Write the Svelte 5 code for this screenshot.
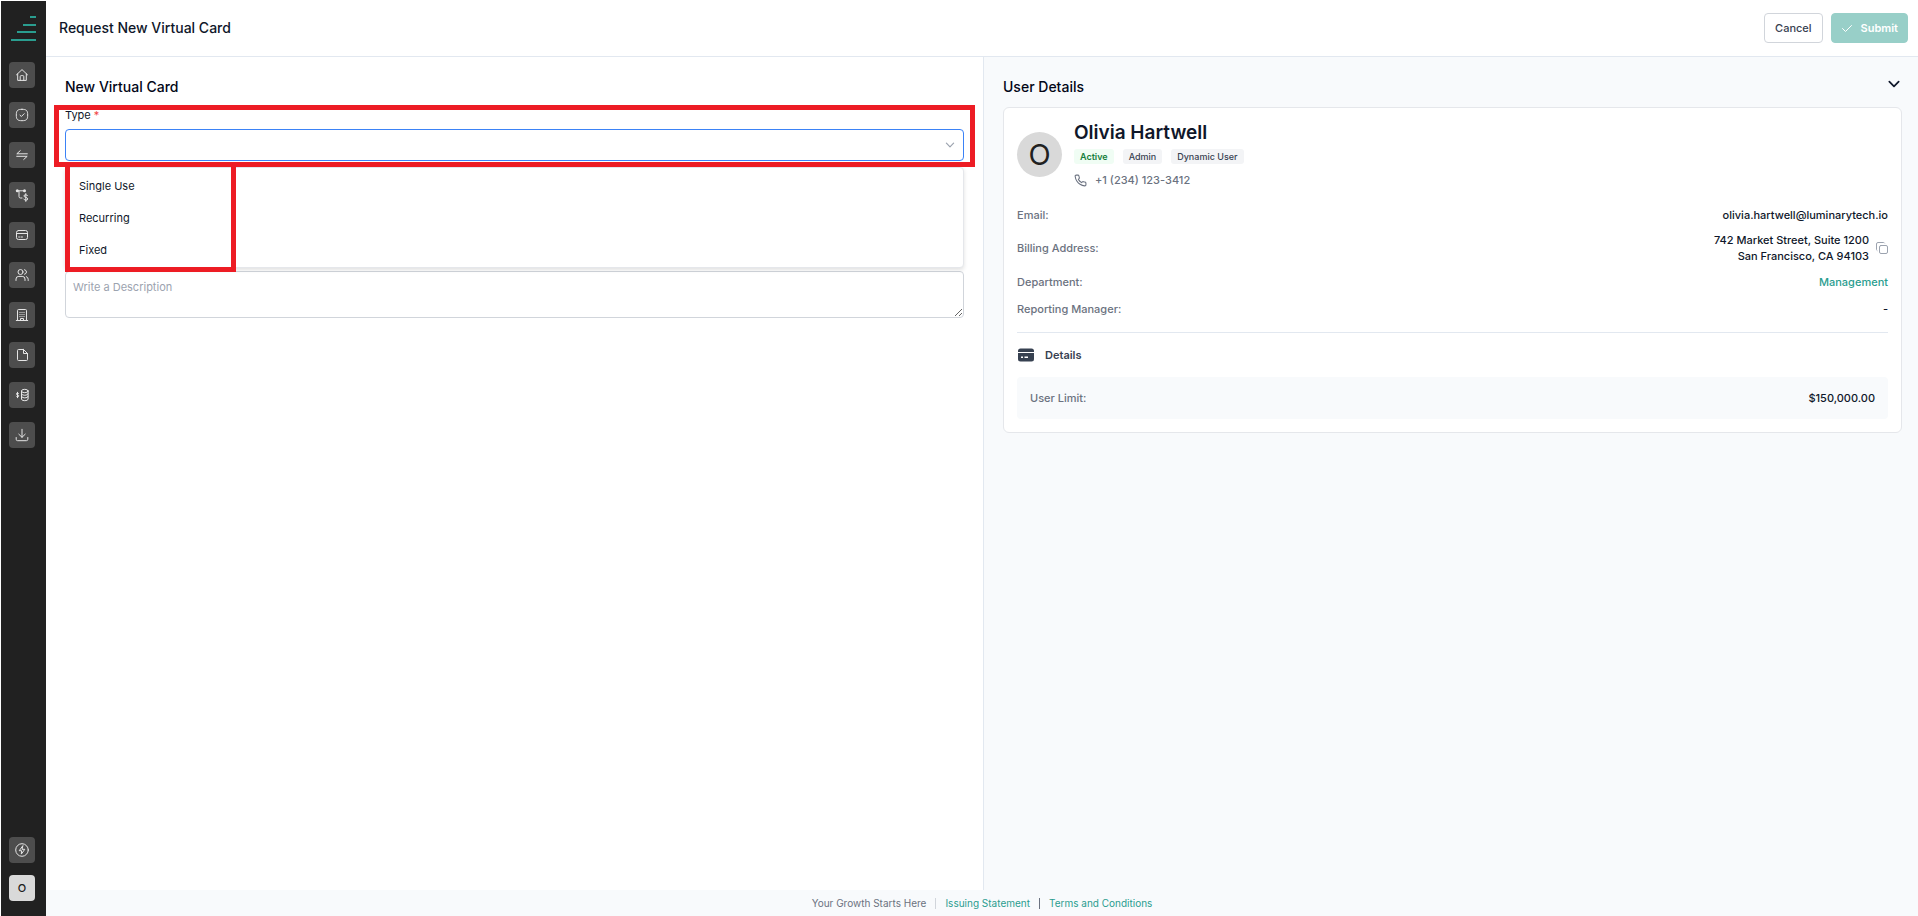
<script>
  let cardType = $state("");
  let description = $state("");
  let menuOpen = $state(true);
  let detailsOpen = $state(true);

  const types = ["Single Use", "Recurring", "Fixed"];

  const navItems = [
    { name: "Home", icon: "home" },
    { name: "Approvals", icon: "approve" },
    { name: "Transfers", icon: "transfer" },
    { name: "Spend Rules", icon: "rules" },
    { name: "Cards", icon: "card" },
    { name: "Users", icon: "users" },
    { name: "Departments", icon: "building" },
    { name: "Documents", icon: "file" },
    { name: "Budgets", icon: "coins" },
    { name: "Downloads", icon: "download" },
  ];

  function pickType(type) {
    cardType = type;
    menuOpen = false;
  }

  function toggleMenu(event) {
    event.preventDefault();
    menuOpen = !menuOpen;
  }
</script>

{#snippet navIcon(icon)}
  <svg class="nav-icon" viewBox="0 0 14 14" aria-hidden="true">
    {#if icon === "home"}
      <path d="M1.5 6.8 7 1.6l5.500 5.200M2.700 6v6.400h8.600V6M5.200 12.300V8.600a1 1 0 0 1 1-1h1.600a1 1 0 0 1 1 1v3.700" />
    {:else if icon === "approve"}
      <path d="M7 1.300c4.500 0 5.700 1.200 5.700 5.700s-1.200 5.700-5.700 5.700S1.300 11.500 1.300 7 2.500 1.300 7 1.300z" />
      <path d="m5 7.200 1.400 1.300L9.200 5.700" />
    {:else if icon === "transfer"}
      <path d="M12.300 5.800H1.800L5.300 2.600M1.700 8.300h10.500l-3.500 3.200" />
    {:else if icon === "rules"}
      <path d="M3 2.800h6M4 3v5.500q0 1.500 1.500 1.500H7" />
      <circle class="solid" cx="2.300" cy="2.800" r="1.500" />
      <circle class="solid" cx="9.500" cy="2.800" r="1.500" />
      <path d="M12.500 7.700q-.6-1-1.900-1-1.600 0-1.600 1.300 0 1 1.800 1.400 1.900.4 1.900 1.500 0 1.300-1.800 1.300-1.500 0-2.100-1.100M10.800 5.600v7.800" />
    {:else if icon === "card"}
      <rect x="1.500" y="2.500" width="11" height="9" rx="2" />
      <path d="M1.500 5.500h11M3.700 9h.8M6 9h1.500" />
    {:else if icon === "users"}
      <circle cx="5.500" cy="4" r="2.500" />
      <path d="M1 12.500V11q0-2.600 2.800-2.600h3.400Q10 8.400 10 11v1.500M9.500 1.700q2 .5 2 2.300t-2 2.300M11.300 8.600q1.900.6 1.900 2.700v1.200" />
    {:else if icon === "building"}
      <path d="M1.300 12.500h11.400M2.500 12.500v-10q0-1 1-1h7q1 0 1 1v10" />
      <path class="dots" d="M4.500 4.500h1M6.500 4.500h1M8.500 4.500h1M4.500 6.500h1M6.500 6.500h1M8.500 6.500h1M4.500 8.500h1M6.500 8.500h1M8.500 8.500h1M5.500 12.500v-2h3v2" />
    {:else if icon === "file"}
      <path d="M8.500 1.500h-5q-1 0-1 1v9q0 1 1 1h8q1 0 1-1v-6l-4-4zM8.500 1.500v4h4" />
    {:else if icon === "coins"}
      <ellipse cx="9.800" cy="3" rx="3.300" ry="1.700" />
      <path d="M6.500 3v8q0 1.700 3.300 1.700t3.300-1.700V3M6.500 5.700q0 1.600 3.300 1.600t3.300-1.600M6.500 8.300q0 1.600 3.300 1.600t3.300-1.600" />
      <path d="M3.700 5.600q-.4-.5-1.200-.5-1.100 0-1.100.9 0 .7 1.200.9t1.200 1q0 .9-1.200.9-.9 0-1.300-.6M2.500 4.300v5.400" />
    {:else if icon === "download"}
      <path d="M7 1.300v8M3.800 6.200 7 9.300l3.200-3.100M1.200 9.500v1.800q0 1.400 1.400 1.400h8.800q1.400 0 1.400-1.400V9.500" />
    {:else if icon === "bolt"}
      <circle cx="7" cy="7" r="6.300" />
      <path d="M7.700 2.900 4.200 7.700h2.400l-.3 3.400 3.500-4.800H7.400z" />
    {/if}
  </svg>
{/snippet}

<div class="app">
  <aside class="sidebar">
    <svg class="logo" viewBox="0 0 25 26" aria-hidden="true">
      <path d="M19 1h6M12 9h13M6 16h19M0 24h25" />
    </svg>
    <nav class="nav" aria-label="Main">
      {#each navItems as item}
        <button class="nav-button" aria-label={item.name}>{@render navIcon(item.icon)}</button>
      {/each}
    </nav>
    <div class="nav-bottom">
      <button class="nav-button" aria-label="Quick actions">{@render navIcon("bolt")}</button>
      <button class="nav-button profile">O</button>
    </div>
  </aside>

  <div class="page">
    <header class="header">
      <h1>Request New Virtual Card</h1>
      <div class="actions">
        <button class="btn">Cancel</button>
        <button class="btn submit" disabled>
          <svg class="check" viewBox="0 0 12 12" aria-hidden="true"><path d="m1.500 6.500 3 3 6-6" /></svg>
          Submit
        </button>
      </div>
    </header>

    <main class="content">
      <section class="form">
        <h2>New Virtual Card</h2>
        <div class="field">
          <label for="type">Type <span class="required">*</span></label>
          <div class="select-wrap">
            <select id="type" bind:value={cardType} onmousedown={toggleMenu}>
              <option value=""></option>
              {#each types as type}
                <option value={type}>{type}</option>
              {/each}
            </select>
            <svg class="select-arrow" viewBox="0 0 10 10" aria-hidden="true"><path d="m2 3.500 3 3 3-3" /></svg>
            {#if menuOpen}
              <div class="menu">
                {#each types as type}
                  <button class="option" onclick={() => pickType(type)}>{type}</button>
                {/each}
                <div class="mark mark-menu"></div>
              </div>
            {/if}
          </div>
          <div class="mark mark-field"></div>
        </div>
        <textarea aria-label="Description" placeholder="Write a Description" bind:value={description}></textarea>
      </section>

      <section class="details">
        <div class="details-head">
          <h2>User Details</h2>
          <button class="collapse" aria-label="Toggle user details" onclick={() => (detailsOpen = !detailsOpen)}>
            <svg viewBox="0 0 12 12" aria-hidden="true"><path d="m2 4 4 4 4-4" /></svg>
          </button>
        </div>

        {#if detailsOpen}
          <div class="card">
            <div class="user">
              <div class="avatar">O</div>
              <div>
                <h3>Olivia Hartwell</h3>
                <div class="badges">
                  <span class="badge active">Active</span>
                  <span class="badge">Admin</span>
                  <span class="badge">Dynamic User</span>
                </div>
                <div class="phone">
                  <svg viewBox="0 0 24 24" aria-hidden="true"><path d="M22 16.920v3a2 2 0 0 1-2.180 2 19.790 19.790 0 0 1-8.630-3.070 19.500 19.500 0 0 1-6-6 19.790 19.790 0 0 1-3.070-8.670A2 2 0 0 1 4.110 2h3a2 2 0 0 1 2 1.720c.127.960.361 1.903.7 2.810a2 2 0 0 1-.45 2.110L8.090 9.910a16 16 0 0 0 6 6l1.270-1.270a2 2 0 0 1 2.110-.45c.907.339 1.850.573 2.810.7A2 2 0 0 1 22 16.920z" /></svg>
                  +1 (234) 123-3412
                </div>
              </div>
            </div>

            <dl class="rows">
              <div class="row">
                <dt>Email:</dt>
                <dd>olivia.hartwell@luminarytech.io</dd>
              </div>
              <div class="row">
                <dt>Billing Address:</dt>
                <dd class="address">
                  <span>742 Market Street, Suite 1200<br />San Francisco, CA 94103</span>
                  <button class="copy" aria-label="Copy address">
                    <svg viewBox="0 0 12 12" aria-hidden="true">
                      <rect x="3.500" y="3.500" width="8" height="8" rx="1.500" />
                      <path d="M1 8.500Q.5 8.200.5 7.500V2Q.5.5 2 .5h5.500q.7 0 1 .5" />
                    </svg>
                  </button>
                </dd>
              </div>
              <div class="row">
                <dt>Department:</dt>
                <dd><a href="#management">Management</a></dd>
              </div>
              <div class="row">
                <dt>Reporting Manager:</dt>
                <dd>-</dd>
              </div>
            </dl>

            <h4>
              <svg viewBox="0 0 18 14" aria-hidden="true">
                <path d="M1 4V3q0-2.500 2.500-2.500h11Q17 .5 17 3v1z" />
                <path fill-rule="evenodd" d="M1 5h16v6q0 2.500-2.500 2.500h-11Q1 13.500 1 11zM4 8.500v1.500h2V8.500zM7.500 8.500v1.500H11V8.500z" />
              </svg>
              Details
            </h4>
            <dl class="limit">
              <dt>User Limit:</dt>
              <dd>$150,000.00</dd>
            </dl>
          </div>
        {/if}
      </section>
    </main>

    <footer class="footer">
      <span>Your Growth Starts Here</span>
      <span class="sep light"></span>
      <a href="#issuing">Issuing Statement</a>
      <span class="sep"></span>
      <a href="#terms">Terms and Conditions</a>
    </footer>
  </div>
</div>

<style>
  :global(body) {
    background: #fff;
  }

  .app, .app * {
    box-sizing: border-box;
  }

  .app {
    display: flex;
    min-height: 100vh;
    color: #0f172a;
    font-family: Inter, "Liberation Sans", sans-serif;
    font-size: 11px;
    line-height: 16px;
  }

  h1, h2, h3, h4, dl, dd {
    margin: 0;
  }

  button {
    padding: 0;
    border: 0;
    background: none;
    color: inherit;
    font: inherit;
    cursor: pointer;
  }

  svg {
    fill: none;
    stroke: currentColor;
    stroke-linecap: round;
    stroke-linejoin: round;
  }

  a {
    color: #2a9d8f;
    text-decoration: none;
  }

  /* sidebar */
  .sidebar {
    display: flex;
    flex-direction: column;
    flex: none;
    width: 45px;
    margin: 1px 0 0 1px;
    padding: 15px 8px;
    background: #212121;
  }

  .logo {
    width: 25px;
    height: 26px;
    margin: 0 0 20px 2px;
    stroke: #2a9d8f;
    stroke-width: 2;
    stroke-linecap: butt;
  }

  .nav, .nav-bottom {
    display: flex;
    flex-direction: column;
    gap: 14px;
  }

  .nav-bottom {
    margin-top: auto;
    gap: 12px;
  }

  .nav-button {
    display: flex;
    align-items: center;
    justify-content: center;
    width: 26px;
    height: 26px;
    border-radius: 4px;
    background: #4d4d4d;
    color: #e5e5e5;
  }

  .nav-icon {
    width: 14px;
    height: 14px;
  }

  .nav-icon .solid {
    fill: currentColor;
    stroke: none;
  }

  .nav-icon .dots {
    stroke-linecap: butt;
  }

  .profile {
    background: #d9d9d9;
    color: #212121;
    font-weight: 500;
  }

  /* header */
  .page {
    display: flex;
    flex-direction: column;
    flex: 1;
    min-width: 0;
  }

  .header {
    display: flex;
    align-items: center;
    justify-content: space-between;
    height: 57px;
    padding: 0 10px 0 13px;
    border-bottom: 1px solid #e2e8f0;
  }

  h1, h2 {
    font-size: 14px;
    font-weight: 500;
    line-height: 20px;
  }

  h2 {
    color: #020617;
  }

  .actions {
    display: flex;
    gap: 8px;
  }

  .btn {
    display: flex;
    align-items: center;
    gap: 8px;
    height: 30px;
    padding: 0 10px;
    border: 1px solid #d1d5db;
    border-radius: 4px;
    color: #374151;
    font-weight: 500;
  }

  .submit {
    padding: 0 9px;
    border-color: #98cfc8;
    background: #98cfc8;
    color: #fff;
    font-weight: 600;
  }

  .check {
    width: 12px;
    height: 12px;
  }

  /* form */
  .content {
    display: grid;
    grid-template-columns: calc(50% + 2px) 1fr;
    flex: 1;
  }

  .form {
    display: flex;
    flex-direction: column;
    padding: 20px 19px;
    border-right: 1px solid #e2e8f0;
  }

  .field {
    position: relative;
    margin-top: 10px;
  }

  label {
    display: block;
    margin-bottom: 6px;
  }

  .required {
    color: #ef4444;
  }

  .select-wrap {
    position: relative;
  }

  select {
    display: block;
    width: 100%;
    height: 32px;
    padding: 0 12px;
    border: 1px solid #3b82f6;
    border-radius: 4px;
    outline: 0;
    background: #fff;
    color: inherit;
    font: inherit;
    appearance: none;
  }

  .select-arrow {
    position: absolute;
    top: 10px;
    right: 8px;
    width: 12px;
    height: 12px;
    color: #9ca3af;
    pointer-events: none;
  }

  .menu {
    position: absolute;
    top: 38px;
    left: 0;
    z-index: 1;
    width: 100%;
    padding: 2px 0 1px;
    border: 1px solid #e5e7eb;
    border-radius: 4px;
    background: #fff;
    box-shadow: 0 2px 4px rgb(0 0 0 / 12%);
  }

  .option {
    display: block;
    width: 100%;
    height: 32px;
    padding: 0 13px;
    text-align: left;
  }

  /* red frames round the field and its choices */
  .mark {
    position: absolute;
    z-index: 2;
    border: 5px solid #ed1c24;
    pointer-events: none;
  }

  .mark-field {
    inset: -2px -11px -6px;
  }

  .mark-menu {
    inset: -6px auto -5px -1px;
    width: 171px;
  }

  textarea {
    display: block;
    width: 100%;
    height: 47px;
    margin-top: 110px;
    padding: 7px;
    border: 1px solid #d1d5db;
    border-radius: 4px;
    outline: 0;
    color: inherit;
    font: inherit;
    resize: vertical;
  }

  textarea::placeholder {
    color: #9ca3af;
  }

  /* user details */
  .details {
    padding: 20px 16px 20px 19px;
    background: #f8fafc;
  }

  .details-head {
    display: flex;
    align-items: flex-start;
    justify-content: space-between;
    margin-bottom: 10px;
  }

  .collapse svg {
    display: block;
    width: 14px;
    height: 14px;
    margin-right: 1px;
    stroke-width: 1.500;
  }

  .card {
    padding: 13px;
    border: 1px solid #e5e7eb;
    border-radius: 6px;
    background: #fff;
  }

  .user {
    display: flex;
    align-items: center;
    gap: 12px;
  }

  .avatar {
    display: flex;
    align-items: center;
    justify-content: center;
    width: 45px;
    height: 45px;
    border-radius: 50%;
    background: #d9d9d9;
    color: #212121;
    font-size: 29px;
  }

  h3 {
    font-size: 19px;
    font-weight: 600;
    line-height: 24px;
  }

  .badges {
    display: flex;
    gap: 9px;
    margin: 4px 0 8px;
  }

  .badge {
    padding: 0 6px;
    border-radius: 3px;
    background: #f3f4f6;
    color: #374151;
    font-size: 9px;
    font-weight: 500;
    line-height: 15px;
  }

  .active {
    background: #f0fdf4;
    color: #15803d;
    font-weight: 600;
  }

  .phone {
    display: flex;
    align-items: center;
    gap: 8px;
    color: #6b7280;
    font-weight: 500;
  }

  .phone svg {
    width: 13px;
    height: 13px;
    stroke-width: 2;
  }

  .rows {
    display: flex;
    flex-direction: column;
    gap: 8px;
    margin-top: 17px;
    padding-bottom: 14px;
    border-bottom: 1px solid #e2e8f0;
    font-weight: 500;
  }

  .row {
    display: flex;
    align-items: center;
    justify-content: space-between;
    min-height: 19px;
    text-align: right;
  }

  dt {
    color: #6b7280;
  }

  .address {
    display: flex;
    align-items: center;
    gap: 7px;
  }

  .copy svg {
    display: block;
    width: 12px;
    height: 12px;
    color: #9ca3af;
  }

  h4 {
    display: flex;
    align-items: center;
    gap: 10px;
    margin: 14px 0;
    color: #374151;
    font-size: 11px;
    font-weight: 600;
  }

  h4 svg {
    width: 18px;
    height: 14px;
    fill: currentColor;
    stroke: none;
  }

  .limit {
    display: flex;
    justify-content: space-between;
    padding: 13px;
    border-radius: 4px;
    background: #f8fafc;
    font-weight: 500;
  }

  /* footer */
  .footer {
    display: flex;
    align-items: center;
    justify-content: center;
    gap: 9px;
    height: 26px;
    background: #f8fafc;
    color: #6b7280;
    font-size: 10px;
  }

  .sep {
    width: 1px;
    height: 11px;
    background: #6b7280;
  }

  .light {
    background: #d1d5db;
  }
</style>
